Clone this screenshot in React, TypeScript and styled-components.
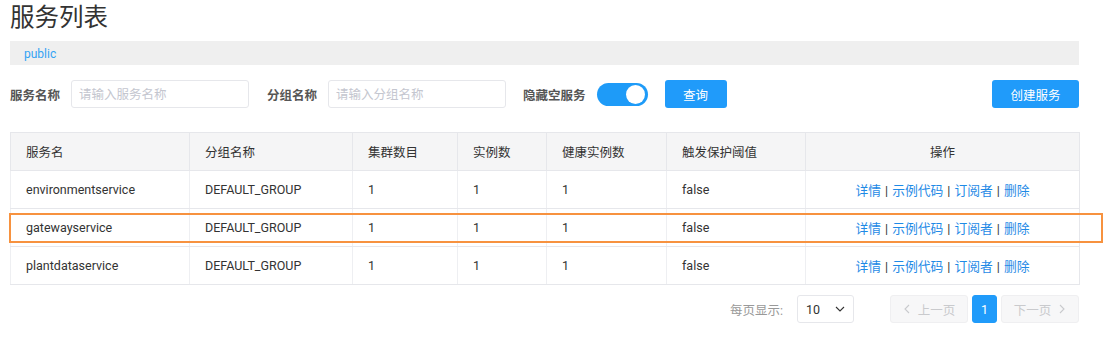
import React from "react";
import styled, { createGlobalStyle } from "styled-components";

const Global = createGlobalStyle`
  html, body { margin: 0; padding: 0; background: #fff; }
  body { font-family: Roboto, "Noto Sans CJK SC", sans-serif; font-size: 12px; color: #333; }
  * { box-sizing: border-box; }
`;

const Page = styled.div`
  width: 1117px;
  height: 348px;
  padding: 0 38px 0 10px;
  position: relative;
  overflow: hidden;
`;

const Title = styled.h1`
  margin: 0;
  height: 41px;
  padding-top: 3px;
  font-size: 24.5px;
  line-height: 30px;
  font-weight: 400;
  color: #333;
`;

const NsBar = styled.div`
  height: 24px;
  background: #efefef;
  display: flex;
  align-items: center;
  padding: 2px 0 0 14px;
`;

const NsLink = styled.span`
  color: #33a3f4;
  font-size: 12px;
`;

const FilterRow = styled.div`
  display: flex;
  align-items: center;
  margin-top: 15px;
  height: 28px;
`;

const Field = styled.div<{ gap: number }>`
  display: flex;
  align-items: center;
  margin-right: ${(p) => p.gap}px;
`;

const Label = styled.span`
  font-weight: 700;
  color: #555;
  font-size: 12.5px;
  margin-right: 11px;
`;

const Input = styled.input`
  width: 178px;
  height: 28px;
  border: 1px solid #e6e7eb;
  border-radius: 3px;
  padding: 0 7px;
  font-family: inherit;
  font-size: 12.5px;
  outline: none;
  &::placeholder { color: #c4c6cf; }
`;

const Toggle = styled.div`
  width: 51px;
  height: 23px;
  border-radius: 12px;
  background: #1e9bf8;
  position: relative;
  margin-left: 0;
  &::after {
    content: "";
    position: absolute;
    right: 3px;
    top: 2px;
    width: 19px;
    height: 19px;
    border-radius: 50%;
    background: #fff;
  }
`;

const Button = styled.button<{ w: number }>`
  height: 28px;
  width: ${(p) => p.w}px;
  background: #209bfa;
  border: none;
  border-radius: 3px;
  color: #fff;
  font-family: inherit;
  font-size: 12.5px;
  padding: 0;
`;

const Spacer = styled.div`
  flex: 1;
`;

const TableWrap = styled.div`
  margin-top: 24px;
  position: relative;
`;

const Table = styled.table`
  width: 1069px;
  border-collapse: collapse;
  table-layout: fixed;
  border: 1px solid #e6e7eb;
`;

const Th = styled.th<{ center?: boolean }>`
  height: 38px;
  background: #f5f5f6;
  font-weight: 400;
  color: #333;
  text-align: ${(p) => (p.center ? "center" : "left")};
  padding: 0 15px;
  font-size: 12.5px;
  border: 1px solid #e6e7eb;
`;

const Td = styled.td<{ center?: boolean }>`
  height: 38px;
  padding: 0 15px;
  text-align: ${(p) => (p.center ? "center" : "left")};
  color: #333;
  font-size: 12.5px;
  border-top: 1px solid #e6e7eb;
  border-bottom: 1px solid #e6e7eb;
  border-left: 1px solid #eeeff2;
`;

const Link = styled.a`
  color: #1f8ae6;
  text-decoration: none;
  font-size: 12.8px;
`;

const Sep = styled.span`
  color: #333;
  margin: 0 4px;
`;

const Highlight = styled.div`
  position: absolute;
  left: -1px;
  top: 81px;
  width: 1094px;
  height: 30px;
  border: 2px solid #f7923f;
  pointer-events: none;
`;

const Pager = styled.div`
  display: flex;
  align-items: center;
  justify-content: flex-end;
  margin-top: 10px;
  height: 28px;
`;

const PagerLabel = styled.span`
  color: #999;
  font-size: 12.5px;
  margin-right: 14px;
`;

const Select = styled.div`
  width: 57px;
  height: 28px;
  border: 1px solid #e6e7eb;
  border-radius: 3px;
  display: flex;
  align-items: center;
  justify-content: space-between;
  padding: 0 8px;
  font-size: 12.5px;
  color: #333;
  margin-right: 32px;
`;

const PageBtn = styled.div<{ active?: boolean; w: number }>`
  width: ${(p) => p.w}px;
  height: 28px;
  border-radius: 3px;
  display: flex;
  align-items: center;
  justify-content: center;
  gap: 7px;
  margin-left: 4px;
  font-size: 12.5px;
  background: ${(p) => (p.active ? "#209bfa" : "#f7f7f8")};
  color: ${(p) => (p.active ? "#fff" : "#c9cacd")};
  border: 1px solid ${(p) => (p.active ? "#209bfa" : "#efeff1")};
`;

const Chevron = ({ dir }: { dir: "l" | "r" | "d" }) => {
  const d = dir === "l" ? "M6 1 L2 5 L6 9" : dir === "r" ? "M2 1 L6 5 L2 9" : "M1 3 L5 7 L9 3";
  const w = dir === "d" ? 10 : 8;
  return (
    <svg width={w} height={10} viewBox={`0 0 ${w} 10`} fill="none" stroke="currentColor" strokeWidth="1.1">
      <path d={d} />
    </svg>
  );
};

const rows = ["environmentservice", "gatewayservice", "plantdataservice"];
const widths = [179, 163, 105, 89, 120, 139, 274];

export default function App() {
  return (
    <Page>
      <Global />
      <Title>服务列表</Title>
      <NsBar>
        <NsLink>public</NsLink>
      </NsBar>
      <FilterRow>
        <Field gap={18}>
          <Label>服务名称</Label>
          <Input placeholder="请输入服务名称" />
        </Field>
        <Field gap={17}>
          <Label>分组名称</Label>
          <Input placeholder="请输入分组名称" />
        </Field>
        <Field gap={17}>
          <Label>隐藏空服务</Label>
          <Toggle />
        </Field>
        <Button w={62}>查询</Button>
        <Spacer />
        <Button w={87}>创建服务</Button>
      </FilterRow>
      <TableWrap>
        <Table>
          <colgroup>
            {widths.map((w, i) => (
              <col key={i} style={{ width: w }} />
            ))}
          </colgroup>
          <thead>
            <tr>
              <Th>服务名</Th>
              <Th>分组名称</Th>
              <Th>集群数目</Th>
              <Th>实例数</Th>
              <Th>健康实例数</Th>
              <Th>触发保护阈值</Th>
              <Th center>操作</Th>
            </tr>
          </thead>
          <tbody>
            {rows.map((r) => (
              <tr key={r}>
                <Td>{r}</Td>
                <Td>DEFAULT_GROUP</Td>
                <Td>1</Td>
                <Td>1</Td>
                <Td>1</Td>
                <Td>false</Td>
                <Td center>
                  <Link>详情</Link>
                  <Sep>|</Sep>
                  <Link>示例代码</Link>
                  <Sep>|</Sep>
                  <Link>订阅者</Link>
                  <Sep>|</Sep>
                  <Link>删除</Link>
                </Td>
              </tr>
            ))}
          </tbody>
        </Table>
        <Highlight />
      </TableWrap>
      <Pager>
        <PagerLabel>每页显示:</PagerLabel>
        <Select>
          <span>10</span>
          <Chevron dir="d" />
        </Select>
        <PageBtn w={78}>
          <Chevron dir="l" />
          <span>上一页</span>
        </PageBtn>
        <PageBtn w={25} active>
          1
        </PageBtn>
        <PageBtn w={78}>
          <span>下一页</span>
          <Chevron dir="r" />
        </PageBtn>
      </Pager>
    </Page>
  );
}
